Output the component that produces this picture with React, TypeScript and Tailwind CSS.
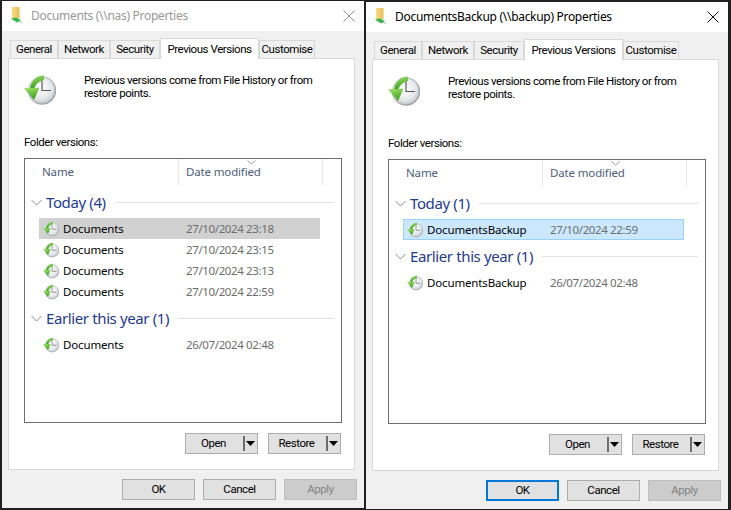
import React from "react";

const UI = "font-['Roboto','Noto_Sans',sans-serif] text-[11.5px] tracking-[-0.45px]";

function Clock({ size }: { size: number }) {
  return (
    <svg width={size} height={size} viewBox="0 0 32 32" className="shrink-0">
      <defs>
        <radialGradient id="face" cx="45%" cy="40%" r="70%">
          <stop offset="0%" stopColor="#ffffff" />
          <stop offset="60%" stopColor="#e4e7e9" />
          <stop offset="100%" stopColor="#a9b0b4" />
        </radialGradient>
        <linearGradient id="rim" x1="0" y1="0" x2="1" y2="1">
          <stop offset="0%" stopColor="#dfe3e5" />
          <stop offset="100%" stopColor="#8f969a" />
        </linearGradient>
        <linearGradient id="arrow" x1="0" y1="0" x2="0.3" y2="1">
          <stop offset="0%" stopColor="#a6e06a" />
          <stop offset="100%" stopColor="#3aa51f" />
        </linearGradient>
      </defs>
      <circle cx="18" cy="16.5" r="13.5" fill="url(#face)" stroke="url(#rim)" strokeWidth="1.6" />
      <path d="M18 6.5V16.5H27" fill="none" stroke="#55595c" strokeWidth="1.2" />
      <path d="M20 1.5C13 1.5 7.5 6 6 14H10.5C11.5 10.5 15 7 20 6Z" fill="url(#arrow)" />
      <path d="M0 14.2L15.5 13.8L10 26Z" fill="url(#arrow)" />
    </svg>
  );
}

function Folder() {
  return (
    <svg width="11" height="16" viewBox="0 0 11 16" className="-mt-[2px] shrink-0">
      <defs>
        <linearGradient id="fold" x1="0" y1="0" x2="1" y2="0">
          <stop offset="0%" stopColor="#f6dc8a" />
          <stop offset="100%" stopColor="#e8bd52" />
        </linearGradient>
      </defs>
      <path d="M1 0H8.5V11H1Z" fill="url(#fold)" />
      <path d="M0 11.5L5 10.5L10 13L6 15.5Z" fill="#35b54a" />
      <path d="M8 14.5L11 15.5" stroke="#a9b6ae" strokeWidth="1" />
    </svg>
  );
}

function Chevron() {
  return (
    <svg width="11" height="7" viewBox="0 0 11 7" className="shrink-0">
      <path d="M0.5 1L5.5 6L10.5 1" fill="none" stroke="#8a8a8a" strokeWidth="1" />
    </svg>
  );
}

function Btn({ label, kind }: { label: string; kind?: "primary" | "disabled" }) {
  const cls =
    kind === "primary"
      ? "border-2 border-[#0078d7] bg-[#e1e1e1] text-black"
      : kind === "disabled"
        ? "border border-[#bfbfbf] bg-[#cccccc] text-[#838383]"
        : "border border-[#adadad] bg-[#e1e1e1] text-black";
  return (
    <div className={"flex h-[21px] w-[73px] items-center justify-center " + UI + " " + cls}>{label}</div>
  );
}

function SplitBtn({ label }: { label: string }) {
  return (
    <div className={"flex h-[21px] w-[73px] items-center border border-[#adadad] bg-[#e1e1e1] text-black " + UI}>
      <span className="mr-[2px] w-[55px] text-center">{label}</span>
      <span className="h-[15px] w-[2px] bg-[#6d6d6d]" />
      <svg width="9" height="5" viewBox="0 0 9 5" className="ml-[1px]">
        <path d="M0 0H9L4.5 5Z" fill="#000" />
      </svg>
    </div>
  );
}

function Row({ name, date, state }: { name: string; date: string; state?: "grey" | "blue" }) {
  const bg =
    state === "grey"
      ? "bg-[#d1d1d1]"
      : state === "blue"
        ? "bg-[#cce8ff] outline outline-1 -outline-offset-1 outline-[#99d1ff]"
        : "";
  return (
    <div className={"ml-[14px] flex h-[21px] w-[281px] items-center pl-[4px] " + bg}>
      <Clock size={16} />
      <span className="ml-[4px] w-[123px] text-[11.5px] tracking-[-0.15px] text-black">{name}</span>
      <span className="text-[11.5px] tracking-[-0.37px] text-[#6d6d6d]">{date}</span>
    </div>
  );
}

function Group({ title, children }: { title: string; children: React.ReactNode }) {
  return (
    <div>
      <div className="flex h-[32px] items-center pl-[6px] pr-[7px]">
        <Chevron />
        <span className="ml-[4px] text-[15px] tracking-[-0.38px] text-[#1f3a93]">{title}</span>
        <span className="ml-[9px] h-px flex-1 bg-[#e2e2e2]" />
      </div>
      {children}
    </div>
  );
}

function Tab({ label, w }: { label: string; w: number }) {
  return (
    <div
      className={"flex h-[18px] items-center justify-center border border-b-0 border-[#d9d9d9] bg-[#f0f0f0] text-black " + UI}
      style={{ width: w }}
    >
      {label}
    </div>
  );
}

function Win({
  title,
  active,
  groups,
  className,
}: {
  title: string;
  active: boolean;
  groups: React.ReactNode;
  className: string;
}) {
  return (
    <div className={"flex h-[507px] w-[362px] flex-col bg-[#f0f0f0] " + className}>
      <div className="flex h-[30px] items-center bg-white pl-[9px] pr-[9px]">
        <Folder />
        <span className={"ml-[9px] flex-1 text-[12px] tracking-[-0.3px] " + (active ? "text-black" : "text-[#999999]")}>
          {title}
        </span>
        <svg width="12" height="12" viewBox="0 0 12 12">
          <path d="M0.5 0.5L11.5 11.5M11.5 0.5L0.5 11.5" stroke={active ? "#111" : "#8c8c8c"} strokeWidth="1" />
        </svg>
      </div>
      <div className="flex h-[27px] items-end pl-[8px]">
        <Tab label="General" w={48} />
        <Tab label="Network" w={52} />
        <Tab label="Security" w={50} />
        <div
          className={"relative z-10 -mb-px flex h-[21px] w-[99px] items-start justify-center whitespace-nowrap border border-b-0 border-[#d9d9d9] bg-white pt-[2px] text-black " + UI}
        >
          Previous Versions
        </div>
        <Tab label="Customise" w={56} />
      </div>
      <div className="mx-[6px] mr-[9px] flex h-[412px] flex-col border border-[#d9d9d9] bg-white pl-[15px] pr-[12px]">
        <div className="flex h-[53px] pt-[15px]">
          <Clock size={32} />
          <p className={"ml-[28px] w-[235px] leading-[13px] text-black " + UI}>
            Previous versions come from File History or from restore points.
          </p>
        </div>
        <div className={"mt-[22px] flex h-[18px] items-center text-black " + UI}>Folder versions:</div>
        <div className="relative mt-[6px] h-[265px] w-[318px] border border-[#6e6e6e]">
          <div className="flex h-[26px]">
            <div className="w-[154px] border-r border-[#e5e5e5] pl-[17px] pt-[4px] text-[11.5px] tracking-[-0.15px] text-[#4c607a]">
              Name
            </div>
            <div className="w-[144px] border-r border-[#e5e5e5] pl-[7px] pt-[4px] text-[11.5px] tracking-[-0.15px] text-[#4c607a]">
              Date modified
            </div>
          </div>
          <svg width="9" height="5" viewBox="0 0 9 5" className="absolute left-[222px] top-[1px]">
            <path d="M0.5 0.5L4.5 4L8.5 0.5" fill="none" stroke="#9a9a9a" />
          </svg>
          <div className="pt-px">{groups}</div>
        </div>
        <div className="mt-[10px] flex justify-end gap-[10px] pr-[1px]">
          <SplitBtn label="Open" />
          <SplitBtn label="Restore" />
        </div>
      </div>
      <div className="flex justify-end gap-[8px] pr-[7px] pt-[9px]">
        <Btn label="OK" kind={active ? "primary" : undefined} />
        <Btn label="Cancel" />
        <Btn label="Apply" kind="disabled" />
      </div>
    </div>
  );
}

export default function App() {
  return (
    <div className="flex h-[510px] w-[731px] gap-[2px] overflow-hidden bg-[#202020] pl-[2px] font-['Noto_Sans','Open_Sans',sans-serif]">
      <Win
        className="mt-[1px]"
        title="Documents (\\nas) Properties"
        active={false}
        groups={
          <>
            <Group title="Today (4)">
              <Row name="Documents" date="27/10/2024 23:18" state="grey" />
              <Row name="Documents" date="27/10/2024 23:15" />
              <Row name="Documents" date="27/10/2024 23:13" />
              <Row name="Documents" date="27/10/2024 22:59" />
            </Group>
            <Group title="Earlier this year (1)">
              <Row name="Documents" date="26/07/2024 02:48" />
            </Group>
          </>
        }
      />
      <Win
        className="mt-[2px]"
        title="DocumentsBackup (\\backup) Properties"
        active={true}
        groups={
          <>
            <Group title="Today (1)">
              <Row name="DocumentsBackup" date="27/10/2024 22:59" state="blue" />
            </Group>
            <Group title="Earlier this year (1)">
              <Row name="DocumentsBackup" date="26/07/2024 02:48" />
            </Group>
          </>
        }
      />
    </div>
  );
}
